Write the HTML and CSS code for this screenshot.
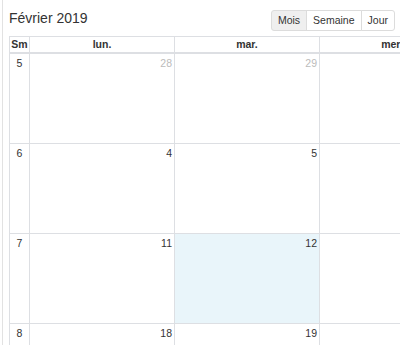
FILE: index.html
```html
<!DOCTYPE html>
<html lang="fr">
<head>
<meta charset="utf-8">
<link rel="stylesheet" href="styles.css">
</head>
<body>
<div class="page">
  <div class="toolbar">
    <h2 class="title">Février 2019</h2>
    <div class="btn-group">
      <button class="btn active">Mois</button>
      <button class="btn">Semaine</button>
      <button class="btn">Jour</button>
    </div>
  </div>
  <div class="cal">
    <div class="grid">
      <div class="hd wk">Sm</div>
      <div class="hd">lun.</div>
      <div class="hd">mar.</div>
      <div class="hd">mer.</div>

      <div class="cell wk">5</div>
      <div class="cell other">28</div>
      <div class="cell other">29</div>
      <div class="cell other"></div>

      <div class="cell wk">6</div>
      <div class="cell">4</div>
      <div class="cell">5</div>
      <div class="cell"></div>

      <div class="cell wk">7</div>
      <div class="cell">11</div>
      <div class="cell today">12</div>
      <div class="cell"></div>

      <div class="cell wk">8</div>
      <div class="cell">18</div>
      <div class="cell">19</div>
      <div class="cell"></div>
    </div>
  </div>
</div>
</body>
</html>
```
FILE: styles.css
```css
html, body {
  margin: 0;
  padding: 0;
  background: #fff;
  overflow: hidden;
}
body {
  font-family: "Liberation Sans", Arial, sans-serif;
  color: #333;
  width: 400px;
  height: 345px;
}
.page {
  margin-left: 2px;
  border-left: 1px solid #e2e2e2;
  padding-left: 6px;
  height: 345px;
  box-sizing: border-box;
  overflow: hidden;
}
.toolbar {
  display: flex;
  justify-content: space-between;
  align-items: flex-start;
  padding-top: 10px;
  height: 21px;
  margin-bottom: 5px;
  padding-right: 5px;
}
.title {
  margin: 0;
  font-size: 14px;
  font-weight: normal;
  line-height: 16px;
  color: #333;
}
.btn-group {
  display: flex;
}
.btn {
  font-family: inherit;
  font-size: 10.5px;
  color: #333;
  background: #fff;
  border: 1px solid #dcdcdc;
  height: 21px;
  padding: 0 6px;
  margin: 0;
  margin-left: -1px;
  line-height: 19px;
}
.btn:first-child {
  border-radius: 3px 0 0 3px;
  margin-left: 0;
}
.btn:last-child {
  border-radius: 0 3px 3px 0;
}
.btn.active {
  background: #efefef;
}
.cal {
  overflow: hidden;
}
.grid {
  display: grid;
  grid-template-columns: 20px repeat(3, 145px);
  grid-template-rows: 17px repeat(4, 90px);
  width: 456px;
  border-left: 1px solid #dddfe3;
  border-top: 1px solid #dddfe3;
}
.hd, .cell {
  border-right: 1px solid #dddfe3;
  border-bottom: 1px solid #dddfe3;
}
.hd {
  font-size: 10.5px;
  font-weight: bold;
  text-align: center;
  line-height: 15px;
  border-bottom-width: 2px;
}
.cell {
  font-size: 10.5px;
  text-align: right;
  padding: 2px 2px 0 0;
  line-height: 14px;
  color: #333;
}
.cell.wk {
  text-align: center;
  padding-right: 0;
}
.cell.other {
  color: #bbb;
}
.cell.today {
  background: #e9f5fa;
}
```
